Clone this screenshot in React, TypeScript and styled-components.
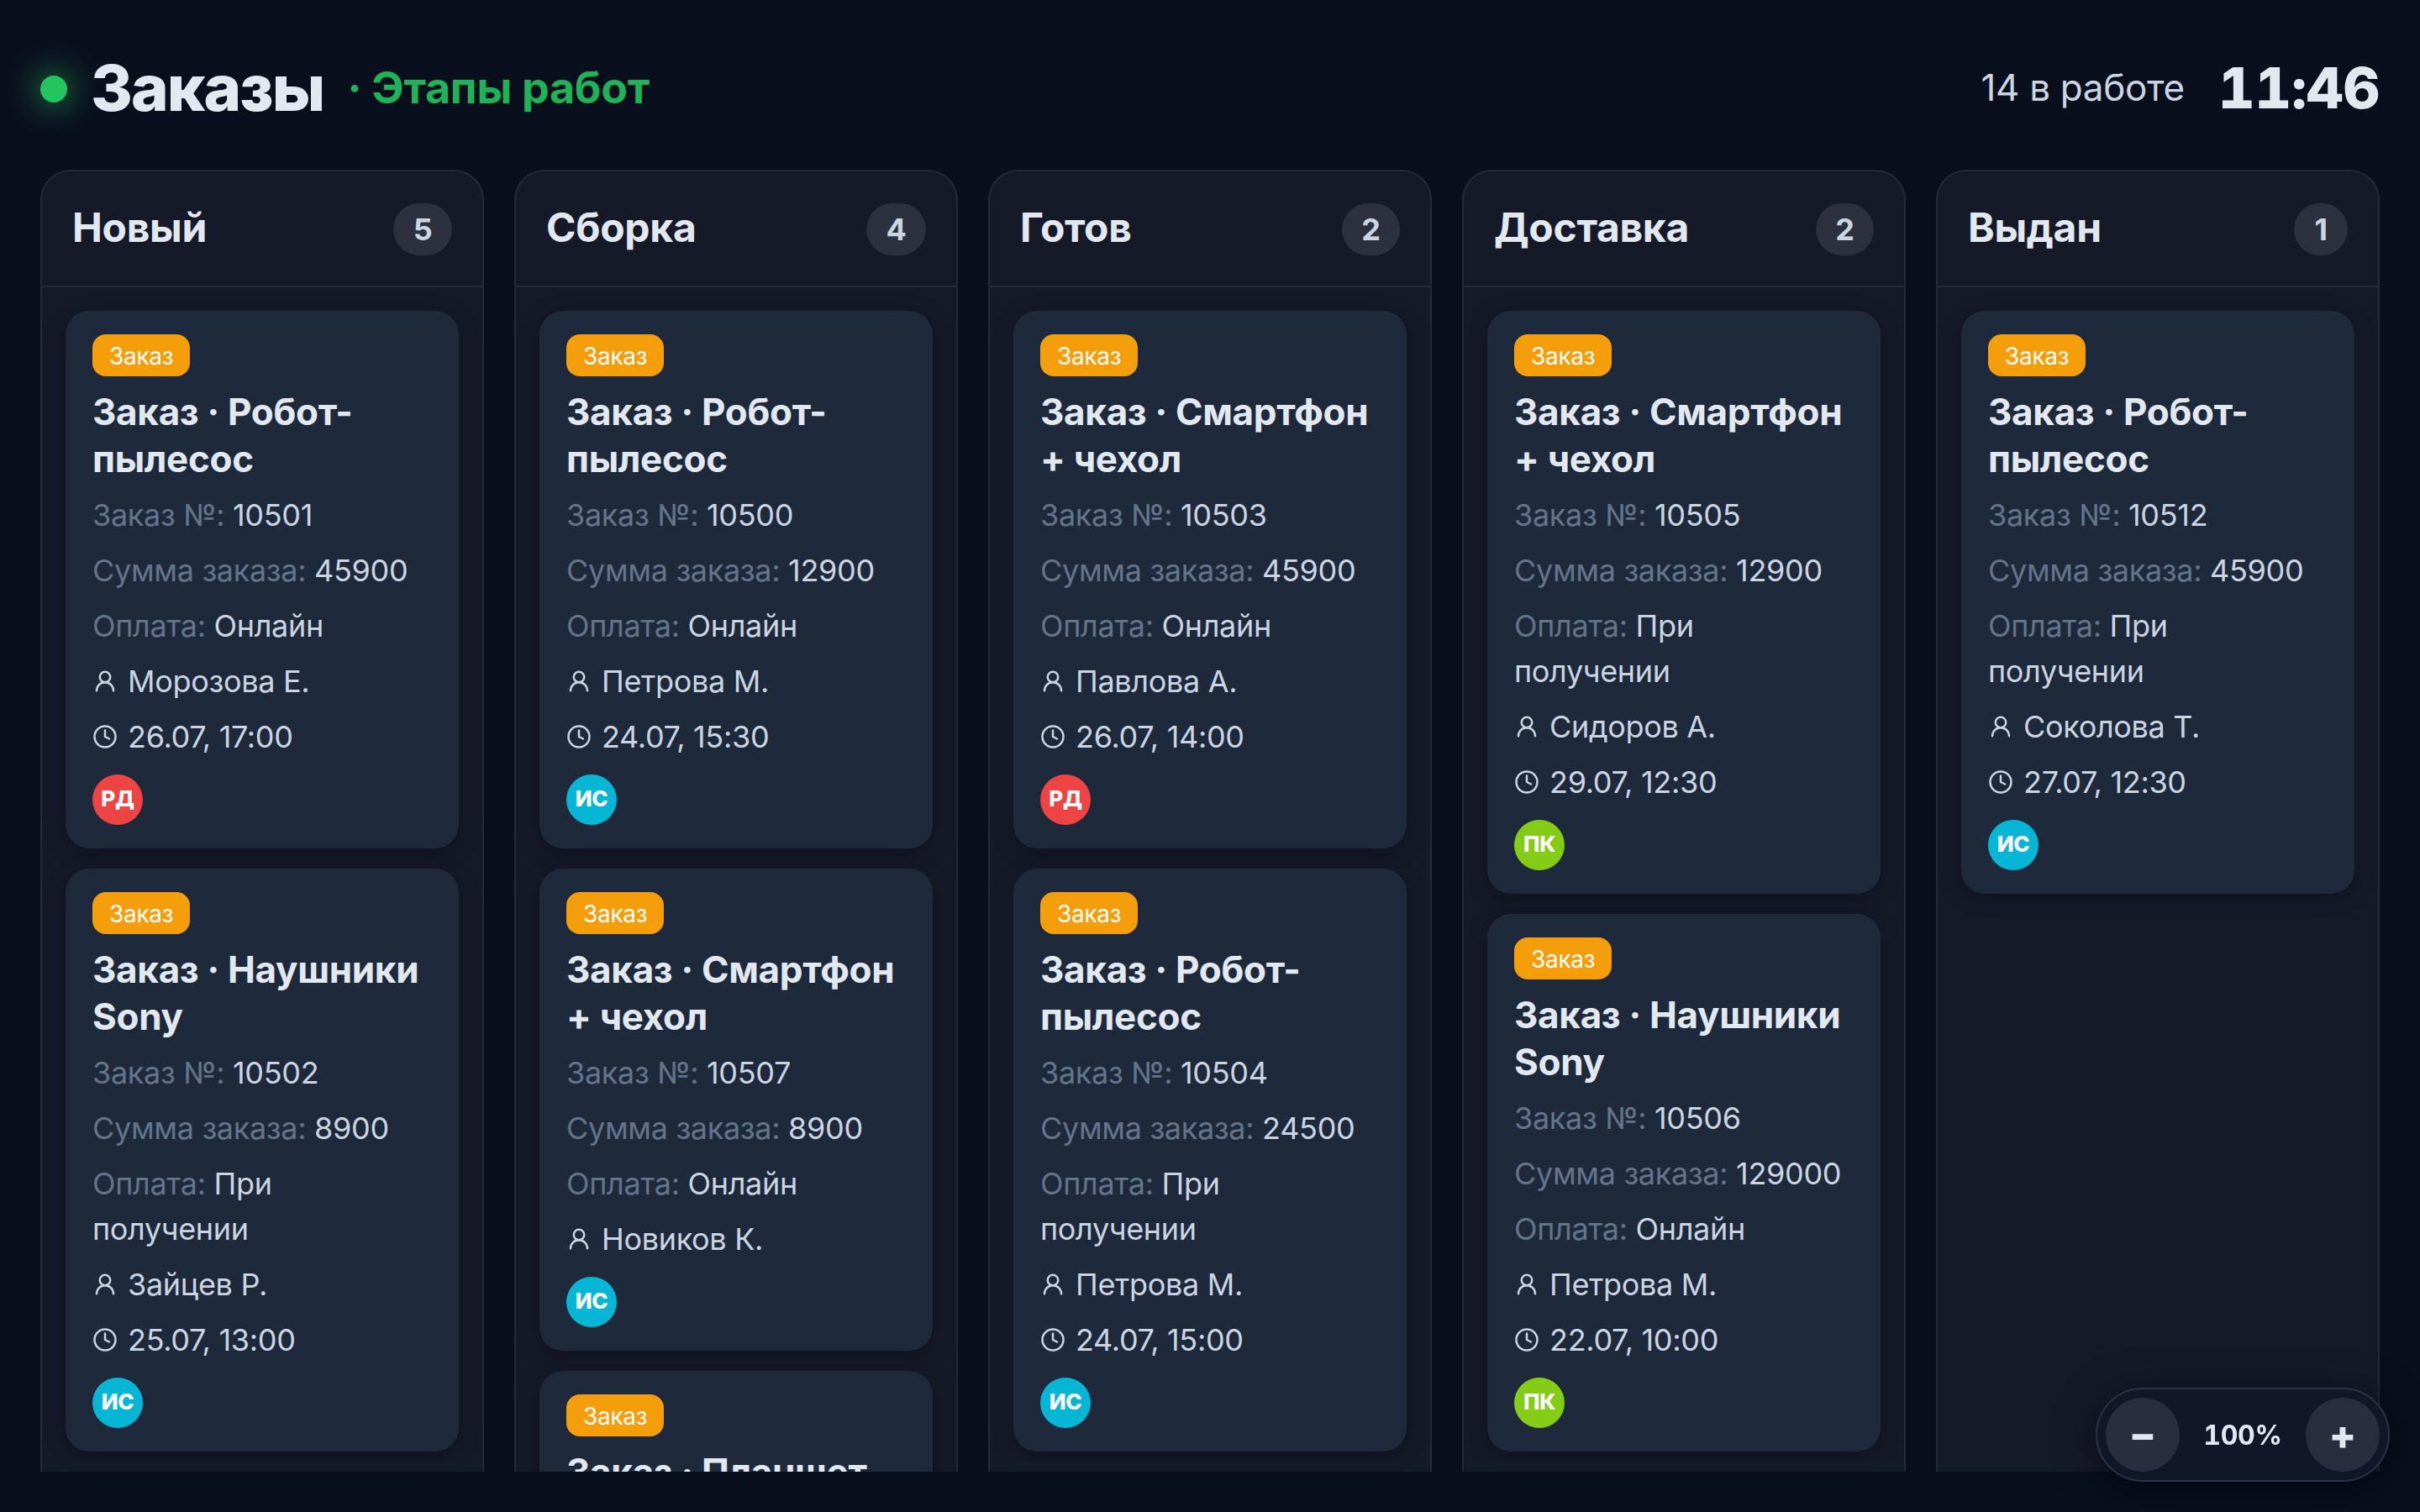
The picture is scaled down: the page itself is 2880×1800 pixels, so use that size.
import React from 'react';
import styled, { createGlobalStyle } from 'styled-components';
import { Clock, UserRound } from 'lucide-react';

interface IOrder {
    title: string;
    number: string;
    sum: string;
    payment: string;
    client: string;
    date?: string;
    assignee: string;
}

interface IStage {
    name: string;
    count: number;
    orders: IOrder[];
}

const assigneeColors: Record<string, string> = {
    'РД': '#ef4444',
    'ИС': '#06b6d4',
    'ПК': '#84cc16'
};

const ROBOT = 'Заказ · Робот-пылесос';
const PHONE = 'Заказ · Смартфон + чехол';
const SONY = 'Заказ · Наушники Sony';
const TABLET = 'Заказ · Планшет';

const stages: IStage[] = [
    {
        name: 'Новый',
        count: 5,
        orders: [
            { title: ROBOT, number: '10501', sum: '45900', payment: 'Онлайн', client: 'Морозова Е.', date: '26.07, 17:00', assignee: 'РД' },
            { title: SONY, number: '10502', sum: '8900', payment: 'При получении', client: 'Зайцев Р.', date: '25.07, 13:00', assignee: 'ИС' }
        ]
    },
    {
        name: 'Сборка',
        count: 4,
        orders: [
            { title: ROBOT, number: '10500', sum: '12900', payment: 'Онлайн', client: 'Петрова М.', date: '24.07, 15:30', assignee: 'ИС' },
            { title: PHONE, number: '10507', sum: '8900', payment: 'Онлайн', client: 'Новиков К.', assignee: 'ИС' },
            { title: TABLET, number: '10508', sum: '24500', payment: 'Онлайн', client: 'Павлова А.', assignee: 'ПК' }
        ]
    },
    {
        name: 'Готов',
        count: 2,
        orders: [
            { title: PHONE, number: '10503', sum: '45900', payment: 'Онлайн', client: 'Павлова А.', date: '26.07, 14:00', assignee: 'РД' },
            { title: ROBOT, number: '10504', sum: '24500', payment: 'При получении', client: 'Петрова М.', date: '24.07, 15:00', assignee: 'ИС' }
        ]
    },
    {
        name: 'Доставка',
        count: 2,
        orders: [
            { title: PHONE, number: '10505', sum: '12900', payment: 'При получении', client: 'Сидоров А.', date: '29.07, 12:30', assignee: 'ПК' },
            { title: SONY, number: '10506', sum: '129000', payment: 'Онлайн', client: 'Петрова М.', date: '22.07, 10:00', assignee: 'ПК' }
        ]
    },
    {
        name: 'Выдан',
        count: 1,
        orders: [
            { title: ROBOT, number: '10512', sum: '45900', payment: 'При получении', client: 'Соколова Т.', date: '27.07, 12:30', assignee: 'ИС' }
        ]
    }
];

const OrderCard: React.FC<{ order: IOrder }> = ({ order }) => {
    return (
        <Card>
            <Badge>Заказ</Badge>
            <CardTitle>{order.title}</CardTitle>
            <Field><Label>Заказ №:</Label> {order.number}</Field>
            <Field><Label>Сумма заказа:</Label> {order.sum}</Field>
            <Field><Label>Оплата:</Label> {order.payment}</Field>
            <IconField>
                <UserRound size={30} strokeWidth={2} />
                {order.client}
            </IconField>
            {order.date && (
                <IconField>
                    <Clock size={30} strokeWidth={2} />
                    {order.date}
                </IconField>
            )}
            <Avatar $color={assigneeColors[order.assignee]}>{order.assignee}</Avatar>
        </Card>
    );
};

export default function App() {
    return (
        <Page>
            <GlobalStyle />
            <Header>
                <StatusDot />
                <PageTitle>Заказы</PageTitle>
                <Subtitle>· Этапы работ</Subtitle>
                <InProgress>14 в работе</InProgress>
                <Time>11:46</Time>
            </Header>

            <Board>
                {stages.map((stage) => (
                    <Column key={stage.name}>
                        <ColumnHeader>
                            <ColumnTitle>{stage.name}</ColumnTitle>
                            <Count>{stage.count}</Count>
                        </ColumnHeader>
                        <CardList>
                            {stage.orders.map((order) => (
                                <OrderCard key={order.number} order={order} />
                            ))}
                        </CardList>
                    </Column>
                ))}
            </Board>

            <ZoomBar>
                <ZoomButton>−</ZoomButton>
                <ZoomValue>100%</ZoomValue>
                <ZoomButton>+</ZoomButton>
            </ZoomBar>
        </Page>
    );
}

const GlobalStyle = createGlobalStyle`
   * {
     box-sizing: border-box;
   }
   body {
     margin: 0;
     background: #0a0f1e;
     font-family: Inter, sans-serif;
     letter-spacing: -0.32px;
   }
`;

const Page = styled.div`
   display: flex;
   flex-direction: column;
   width: 2880px;
   height: 1800px;
   padding: 48px;
   overflow: hidden;
   color: #e2e8f0;
`;

const Header = styled.header`
   display: flex;
   align-items: center;
   height: 116px;
   margin-bottom: 38px;
   flex-shrink: 0;
`;

const StatusDot = styled.span`
   width: 32px;
   height: 32px;
   border-radius: 50%;
   background: #22c55e;
   box-shadow: 0 0 40px #22c55e;
`;

const PageTitle = styled.h1`
   margin: -5px 0 0 28px;
   font-size: 76px;
   font-weight: 800;
   line-height: 92px;
   letter-spacing: -0.025em;
`;

const Subtitle = styled.span`
   margin: -3px 0 0 28px;
   font-size: 52px;
   font-weight: 700;
   color: #22c55e;
   opacity: 0.9;
`;

const InProgress = styled.span`
   margin: -5px 0 0 auto;
   font-size: 44px;
   color: #cbd5e1;
`;

const Time = styled.span`
   margin: -4px 0 0 40px;
   font-size: 68px;
   font-weight: 800;
   font-variant-numeric: tabular-nums;
`;

const Board = styled.main`
   display: grid;
   grid-template-columns: repeat(5, 1fr);
   grid-template-rows: max-content;
   gap: 36px;
   flex: 1;
   min-height: 0;
   overflow: hidden;
`;

const Column = styled.section`
   min-width: 0;
   border: 2px solid #252938;
   border-radius: 36px;
   background: #161928;
`;

const ColumnHeader = styled.div`
   display: flex;
   align-items: center;
   justify-content: space-between;
   height: 138px;
   padding: 2px 36px 0;
   border-bottom: 2px solid #252938;
`;

const ColumnTitle = styled.h2`
   margin: 0 0 4px;
   font-size: 48px;
   font-weight: 700;
   line-height: 58px;
`;

const Count = styled.span`
   min-width: 64px;
   padding: 0 23.5px;
   border-radius: 31px;
   background: #2d303e;
   color: #cbd5e1;
   font-size: 36px;
   font-weight: 700;
   line-height: 62px;
   text-align: center;
`;

const CardList = styled.div`
   display: flex;
   flex-direction: column;
   gap: 24px;
   padding: 28px;
`;

const Card = styled.article`
   display: flex;
   flex-direction: column;
   gap: 12px;
   padding: 28px 32px;
   border-radius: 28px;
   background: #1e293b;
   box-shadow: 0 4px 24px rgba(0, 0, 0, 0.3);
`;

const Badge = styled.span`
   align-self: flex-start;
   height: 50px;
   padding: 0 20px;
   border-radius: 16px;
   background: #f59e0b;
   color: #fff;
   font-size: 28px;
   line-height: 52px;
`;

const CardTitle = styled.h3`
   margin: 2px 0 0;
   font-size: 44px;
   font-weight: 700;
   line-height: 56px;
`;

const Field = styled.div`
   color: #cbd5e1;
   font-size: 36px;
   line-height: 54px;
`;

const Label = styled.span`
   color: #64748b;
`;

const IconField = styled(Field)`
   display: flex;
   align-items: center;
   gap: 12px;
`;

const Avatar = styled.span<{ $color: string }>`
   width: 60px;
   height: 60px;
   margin-top: 6px;
   border-radius: 50%;
   background: ${({ $color }) => $color};
   color: #fff;
   font-size: 26px;
   font-weight: 800;
   line-height: 58px;
   text-align: center;
`;

/* floats over the board, bottom right corner */
const ZoomBar = styled.div`
   position: fixed;
   right: 36px;
   bottom: 36px;
   display: flex;
   align-items: center;
   padding: 10px;
   border: 2px solid #2d3242;
   border-radius: 56px;
   background: #111729;
   box-shadow: 0 8px 48px rgba(0, 0, 0, 0.5);
`;

const ZoomButton = styled.button`
   width: 88px;
   height: 88px;
   padding: 0;
   border: none;
   border-radius: 50%;
   background: #292e3f;
   color: #e2e8f0;
   font-family: inherit;
   font-size: 48px;
   font-weight: 800;
   line-height: 86px;
`;

const ZoomValue = styled.span`
   width: 150px;
   font-size: 32px;
   font-weight: 700;
   font-variant-numeric: tabular-nums;
   text-align: center;
`;
